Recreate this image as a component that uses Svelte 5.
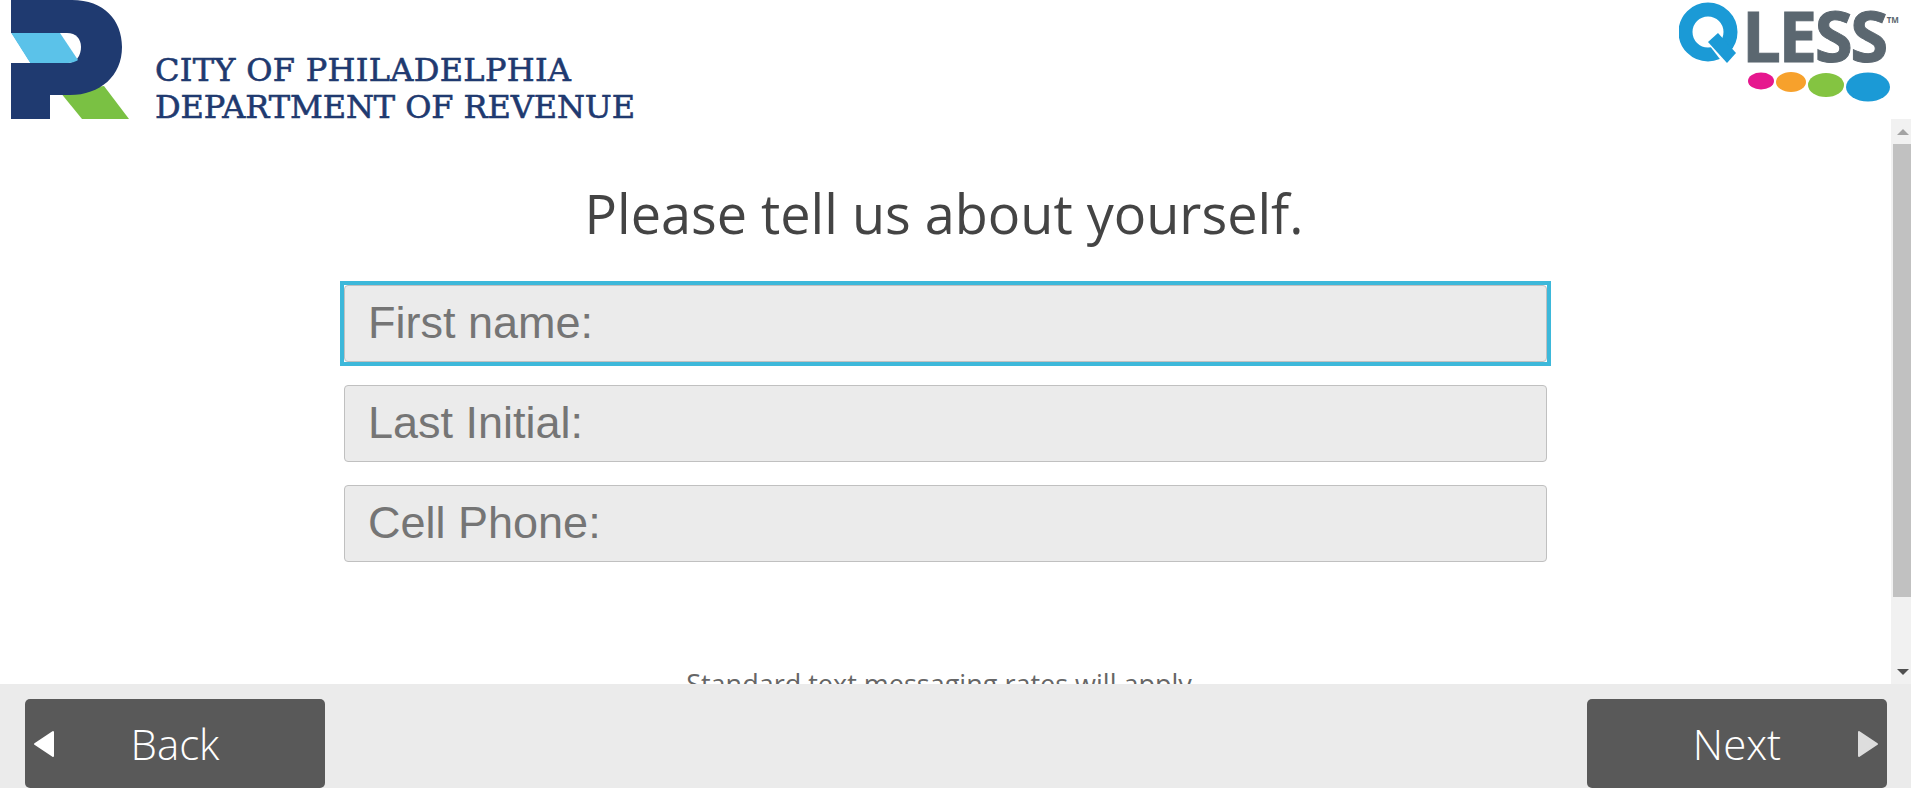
<script>
  const fields = [
    { ph: 'First name:', focused: true },
    { ph: 'Last Initial:', focused: false },
    { ph: 'Cell Phone:', focused: false }
  ];
</script>

<div class="page">
  <header class="header">
    <div class="brand">
      <svg class="r-logo" width="122" height="119" viewBox="11 0 122 119" aria-hidden="true">
        <path fill="#7ac143" d="M60 92 L104 86 L129 119 L82 119 Z" />
        <path fill="#1f3a70" d="M11 0 H72 C104 0 122 20 122 47 C122 76 100 95 70 95 H50 V119 H11 Z" />
        <path fill="#fff" d="M11 33 H67 C76 33 81 39 81 47 C81 56 76 63 67 63 H11 Z" />
        <path fill="#5bc2e9" d="M11 33 H60 L78 60 C75 62 72 63 66 63 H30 Z" />
        <path fill="#fff" d="M11 33 L30 63 H11 Z" />
      </svg>
      <div class="brand-text">
        <div class="line-one">CITY OF PHILADELPHIA</div>
        <div class="line-two">DEPARTMENT OF REVENUE</div>
      </div>
    </div>
    <div class="qless">
      <div class="qless-top">
        <svg class="q" width="62" height="66" viewBox="0 0 62 66" aria-hidden="true">
          <circle cx="29" cy="31" r="22.5" fill="none" stroke="#1b9ad6" stroke-width="14" />
          <path fill="#fff" d="M24 36 L31 36 L53 62 L47 66 Z" />
          <path fill="#1b9ad6" d="M39 32 L57 52 L48 62 L29 41 Z" />
        </svg>
        <span class="less">LESS</span><span class="tm">TM</span>
      </div>
      <svg class="dots" width="144" height="32" viewBox="0 0 144 32" aria-hidden="true">
        <ellipse cx="14" cy="10" rx="13" ry="8.5" fill="#e6178e" />
        <ellipse cx="44" cy="11" rx="15" ry="10" fill="#f7a12c" />
        <ellipse cx="79" cy="14" rx="18" ry="12" fill="#84c441" />
        <ellipse cx="121" cy="16" rx="22" ry="14.5" fill="#1b9ad6" />
      </svg>
    </div>
  </header>

  <div class="middle">
    <main class="content">
      <h1>Please tell us about yourself.</h1>
      <form class="form">
        {#each fields as f}
          <div class="field-wrap" class:focused={f.focused}>
            <input class="field" type="text" placeholder={f.ph} />
          </div>
        {/each}
      </form>
      <p class="note">Standard text messaging rates will apply</p>
    </main>
    <div class="scrollbar" aria-hidden="true">
      <div class="arrow-box"><span class="up"></span></div>
      <div class="track"><div class="thumb"></div></div>
      <div class="arrow-box"><span class="down"></span></div>
    </div>
  </div>

  <footer class="footer">
    <button class="btn" type="button">
      <svg class="tri left" width="22" height="28" viewBox="0 0 22 28" aria-hidden="true">
        <path fill="#fff" stroke="#fff" stroke-width="2" stroke-linejoin="round" d="M2 14 L20 2 V26 Z" />
      </svg>
      Back
    </button>
    <button class="btn" type="button">
      Next
      <svg class="tri right" width="22" height="28" viewBox="0 0 22 28" aria-hidden="true">
        <path fill="#ddd" stroke="#ddd" stroke-width="2" stroke-linejoin="round" d="M2 2 L20 14 L2 26 Z" />
      </svg>
    </button>
  </footer>
</div>

<style>
  :global(body) {
    margin: 0;
    background: #fff;
    font-family: "Open Sans", sans-serif;
  }
  .page {
    width: 1911px;
    height: 788px;
    display: flex;
    flex-direction: column;
    overflow: hidden;
  }
  .header {
    height: 119px;
    flex: none;
    display: flex;
    justify-content: space-between;
    padding-left: 11px;
    box-sizing: border-box;
  }
  .brand {
    display: flex;
    align-items: flex-end;
  }
  .r-logo {
    display: block;
  }
  .brand-text {
    margin-left: 22px;
    margin-bottom: -7px;
    font-family: "DejaVu Serif", serif;
    font-size: 32px;
    line-height: 37px;
    color: #1f3a70;
    white-space: nowrap;
    -webkit-text-stroke: 0.6px #1f3a70;
  }
  .line-one {
    letter-spacing: 0.3px;
  }
  .line-two {
    letter-spacing: -0.1px;
  }
  .qless {
    width: 232px;
    flex: none;
    padding-top: 1px;
    display: flex;
    flex-direction: column;
    box-sizing: border-box;
  }
  .qless-top {
    display: flex;
    align-items: flex-start;
    height: 70px;
  }
  .q {
    flex: none;
    display: block;
  }
  .less {
    font-family: "Open Sans", sans-serif;
    font-weight: 700;
    font-size: 69px;
    line-height: 68px;
    letter-spacing: -2.5px;
    color: #5b6770;
    margin-left: 1px;
    -webkit-text-stroke: 1px #5b6770;
  }
  .tm {
    font-family: "Open Sans", sans-serif;
    font-size: 8px;
    font-weight: 700;
    color: #5b6770;
    margin-top: 13px;
    margin-left: 1px;
  }
  .dots {
    display: block;
    margin-left: 68px;
  }
  .middle {
    flex: 1;
    min-height: 0;
    display: flex;
  }
  .content {
    flex: 1;
    min-width: 0;
    overflow: hidden;
    display: flex;
    flex-direction: column;
    align-items: center;
  }
  h1 {
    margin: 64px 3px 0 0;
    font-size: 54px;
    line-height: 60px;
    font-weight: 400;
    color: #444;
    text-align: center;
  }
  .form {
    margin-top: 42px;
    width: 1203px;
    display: flex;
    flex-direction: column;
    gap: 23px;
  }
  .field-wrap.focused {
    outline: 4px solid #3db8da;
  }
  .field {
    display: block;
    width: 100%;
    height: 77px;
    box-sizing: border-box;
    background: #ebebeb;
    border: 1px solid #c0c0c0;
    border-radius: 4px;
    padding: 0 23px 2px;
    font-family: "Liberation Sans", Arial, sans-serif;
    font-size: 45px;
    color: #333;
    outline: none;
  }
  .field::placeholder {
    color: #757575;
    opacity: 1;
  }
  .note {
    margin: 103px 13px 0 0;
    font-size: 27px;
    line-height: 38px;
    color: #666;
    white-space: nowrap;
  }
  .scrollbar {
    width: 20px;
    flex: none;
    background: #f1f1f1;
    display: flex;
    flex-direction: column;
  }
  .arrow-box {
    height: 25px;
    flex: none;
    display: flex;
    align-items: center;
    justify-content: center;
    padding-left: 3px;
  }
  .up {
    border-left: 6px solid transparent;
    border-right: 6px solid transparent;
    border-bottom: 6px solid #a3a3a3;
  }
  .down {
    border-left: 6px solid transparent;
    border-right: 6px solid transparent;
    border-top: 6px solid #505050;
  }
  .track {
    flex: 1;
    padding-left: 2px;
  }
  .thumb {
    height: 453px;
    background: #c1c1c1;
  }
  .footer {
    height: 104px;
    flex: none;
    background: #ebebeb;
    display: flex;
    justify-content: space-between;
    padding: 15px 24px 0 25px;
    box-sizing: border-box;
  }
  .btn {
    position: relative;
    width: 300px;
    height: 89px;
    border: none;
    border-radius: 5px;
    background: #595959;
    color: #fff;
    font-family: "Open Sans", sans-serif;
    font-weight: 300;
    font-size: 42px;
    padding: 0;
  }
  .tri {
    position: absolute;
    top: 31px;
  }
  .tri.left {
    left: 8px;
  }
  .tri.right {
    right: 8px;
  }
</style>
